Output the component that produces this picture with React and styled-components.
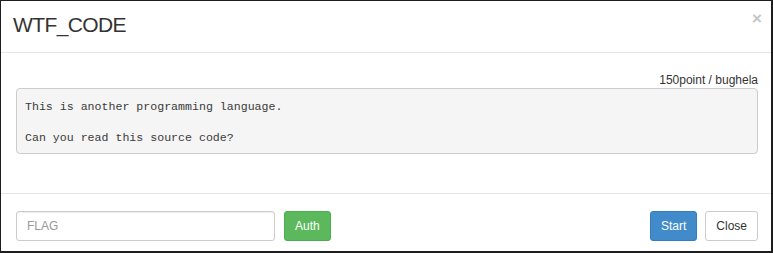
import React from "react";
import styled, { createGlobalStyle } from "styled-components";

const GlobalStyle = createGlobalStyle`
  html, body {
    margin: 0;
    padding: 0;
    background: #fff;
  }
  * {
    box-sizing: border-box;
  }
`;

const Modal = styled.div`
  width: 773px;
  height: 253px;
  border: 1px solid #1e1e1e;
  border-right-width: 2px;
  border-bottom-width: 2px;
  background: #fff;
  font-family: "Liberation Sans", Arial, sans-serif;
  color: #333;
  display: flex;
  flex-direction: column;
`;

const Header = styled.header`
  display: flex;
  justify-content: space-between;
  align-items: flex-start;
  padding: 11px 9px 14px 12px;
  border-bottom: 1px solid #e5e5e5;
`;

const Title = styled.h4`
  margin: 0;
  font-size: 21px;
  line-height: 26px;
  font-weight: normal;
  letter-spacing: -0.6px;
  color: #333;
`;

const CloseX = styled.button`
  border: 0;
  background: none;
  padding: 0;
  margin-top: -3px;
  font-family: "Liberation Sans", Arial, sans-serif;
  font-size: 17px;
  font-weight: bold;
  line-height: 20px;
  color: #c4c4c4;
  cursor: pointer;
`;

const Body = styled.section`
  padding: 20px 13px 39px 15px;
  flex: 1;
`;

const Meta = styled.div`
  text-align: right;
  font-size: 12px;
  line-height: 15px;
  color: #333;
`;

const Pre = styled.pre`
  margin: 0;
  padding: 10px 8px 7px;
  background: #f5f5f5;
  border: 1px solid #ccc;
  border-radius: 4px;
  font-family: "Liberation Mono", "DejaVu Sans Mono", monospace;
  font-size: 11.6px;
  line-height: 15.5px;
  color: #3a3a3a;
  white-space: pre-wrap;
`;

const Footer = styled.footer`
  display: flex;
  justify-content: space-between;
  align-items: center;
  padding: 17px 13px 11px 15px;
  border-top: 1px solid #e5e5e5;
`;

const Group = styled.div`
  display: flex;
  align-items: center;
  gap: ${(p) => p.$gap}px;
`;

const FlagInput = styled.input`
  width: 259px;
  height: 30px;
  padding: 5px 10px;
  border: 1px solid #ccc;
  border-radius: 3px;
  font-family: "Liberation Sans", Arial, sans-serif;
  font-size: 12px;
  color: #555;
  outline: none;
  box-shadow: inset 0 1px 1px rgba(0, 0, 0, 0.075);

  &::placeholder {
    color: #999;
  }
`;

const variants = {
  success: { bg: "#5cb85c", border: "#4cae4c", color: "#fff" },
  primary: { bg: "#428bca", border: "#357ebd", color: "#fff" },
  default: { bg: "#fff", border: "#ccc", color: "#333" },
};

const Button = styled.button`
  height: 30px;
  padding: 0 10px;
  border: 1px solid ${(p) => variants[p.$variant].border};
  border-radius: 3px;
  background: ${(p) => variants[p.$variant].bg};
  color: ${(p) => variants[p.$variant].color};
  font-family: "Liberation Sans", Arial, sans-serif;
  font-size: 12px;
  line-height: 18px;
  cursor: pointer;
`;

export default function App() {
  return (
    <>
      <GlobalStyle />
      <Modal>
        <Header>
          <Title>WTF_CODE</Title>
          <CloseX aria-label="Close">×</CloseX>
        </Header>
        <Body>
          <Meta>150point / bughela</Meta>
          <Pre>{"This is another programming language.\n\nCan you read this source code?"}</Pre>
        </Body>
        <Footer>
          <Group $gap={9}>
            <FlagInput type="text" placeholder="FLAG" />
            <Button $variant="success">Auth</Button>
          </Group>
          <Group $gap={8}>
            <Button $variant="primary">Start</Button>
            <Button $variant="default">Close</Button>
          </Group>
        </Footer>
      </Modal>
    </>
  );
}
